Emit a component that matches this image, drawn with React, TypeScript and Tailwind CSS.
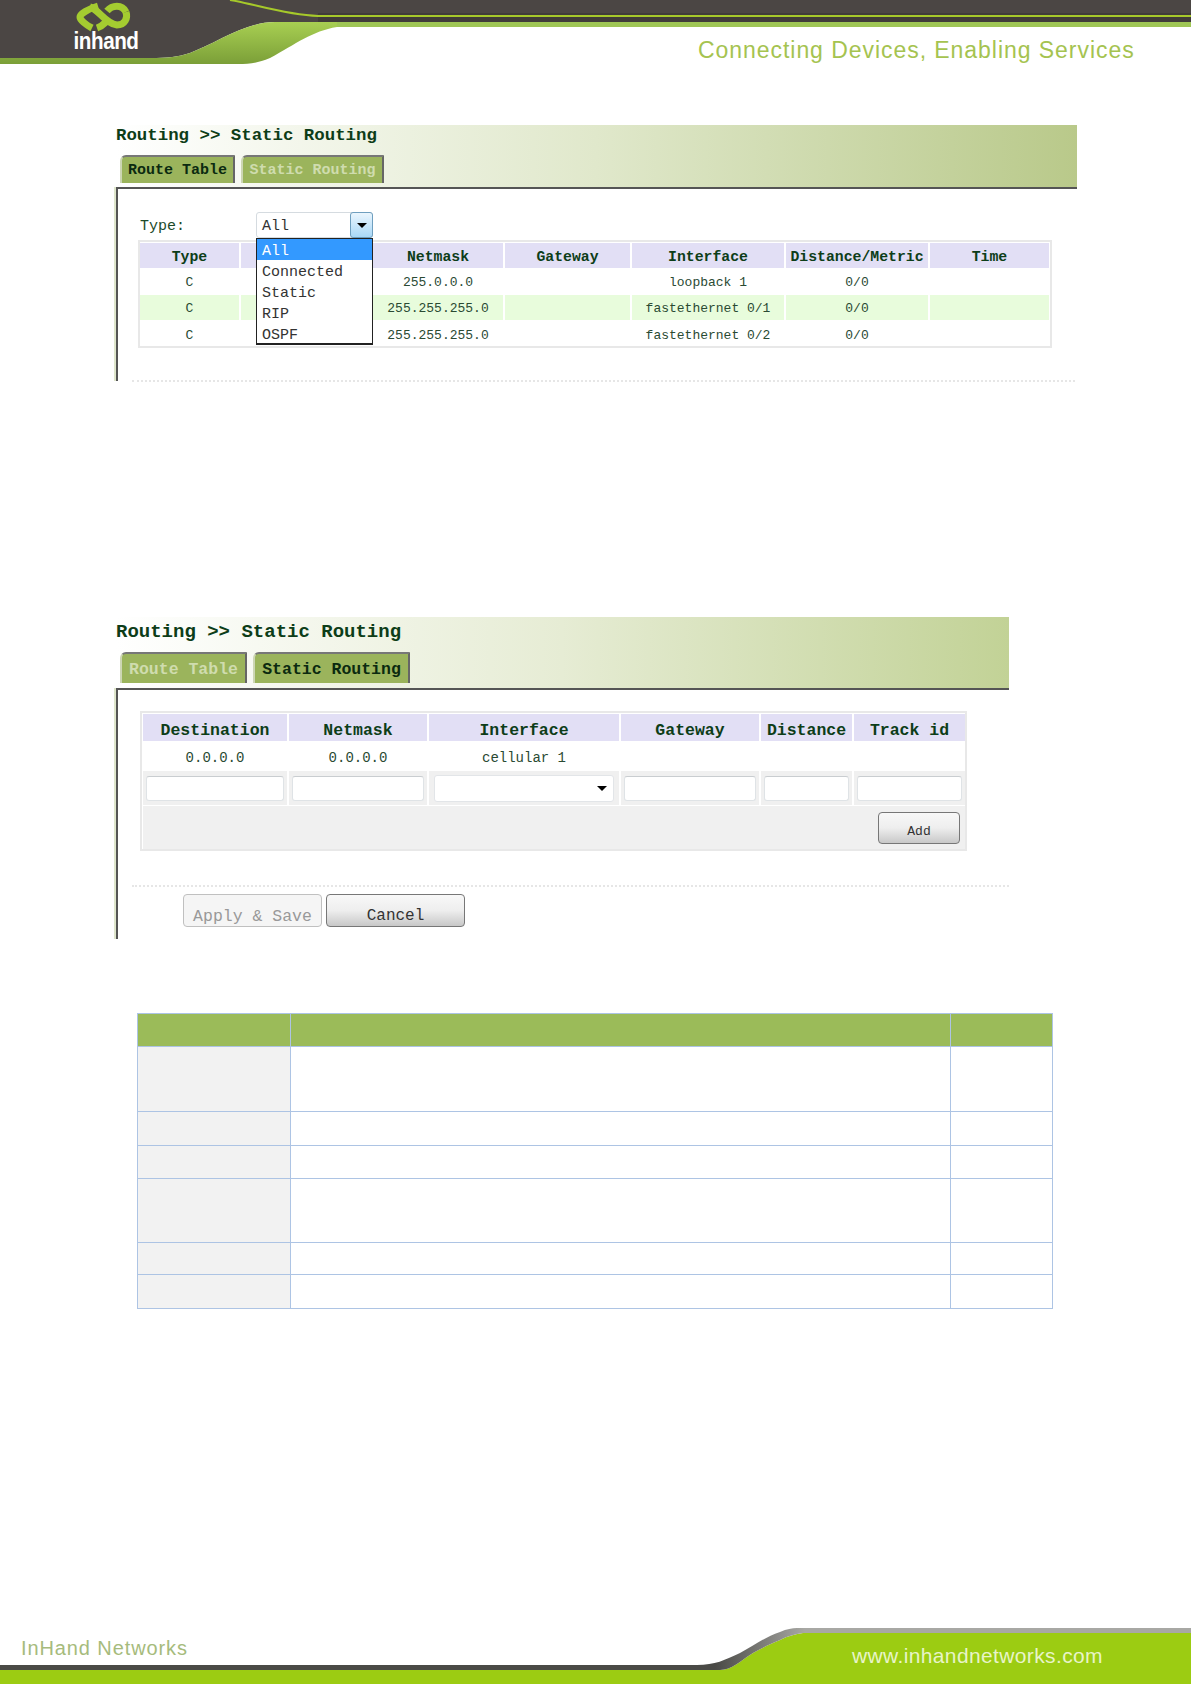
import React from 'react';

const mono = "font-['Liberation_Mono','DejaVu_Sans_Mono',monospace]";

const Header = () => (
  <div className="relative h-[73px] shrink-0">
    <svg width="1191" height="73" viewBox="0 0 1191 73" className="block">
      <defs>
        <linearGradient id="wave" x1="0" y1="0" x2="0" y2="1">
          <stop offset="0" stopColor="#a8cf52" />
          <stop offset="1" stopColor="#7b9f38" />
        </linearGradient>
      </defs>
      <path d="M0 0H1191V22H275C245 22 215 44 190 53C178 57 168 58 150 58H0Z" fill="#4b4644" />
      <path d="M318 13H1191V22H318Z" fill="#403c3a" />
      <path d="M0 58H150C168 58 178 57 190 53C215 44 245 22 275 22H1191V27H337C312 31 296 44 270 58C258 63 250 64 238 64H0Z" fill="url(#wave)" />
      <path d="M337 22H1191V27H337Z" fill="#9fc655" />
      <path d="M230 0C255 4 285 15 318 16H1191" fill="none" stroke="#a6c92a" strokeWidth="2" />
      {/* logo knot */}
      <g fill="none" stroke="#a4cc30" strokeWidth="7">
        <path d="M90 7C98 9 106 24 117 25C125 25 128 18 126 12" />
        <path d="M98 6C88 9 80 14 80 17C80 20 86 25 92 28" />
        <path d="M107 11C112 5 122 4 126 12" />
        <path d="M97 28C100 27 103 25 106 22" />
      </g>
    </svg>
    <span className="absolute left-[66px] top-[27px] w-[80px] text-center text-[24px] leading-[28px] font-bold text-white tracking-[-0.5px] scale-x-[0.86] font-['Liberation_Sans',sans-serif]">
      inhand
    </span>
    <span className="absolute left-[698px] top-[36px] text-[23px] leading-[28px] text-[#a5c350] tracking-[0.95px] whitespace-nowrap font-['Liberation_Sans',sans-serif]">
      Connecting Devices, Enabling Services
    </span>
  </div>
);

const Tab = ({ label, active, className }: { label: string; active: boolean; className: string }) => (
  <div
    className={`flex items-center justify-center bg-[#9bb45c] border-t-2 border-r-2 border-l-2 border-t-[#777] border-r-[#666] border-l-[#cdd6b4] rounded-tl-[6px] font-bold whitespace-nowrap ${mono} ${
      active ? 'text-[#0b2a10]' : 'text-[#cfdcae]'
    } ${className}`}
  >
    {label}
  </div>
);

const Arrow = () => (
  <span className="w-0 h-0 border-x-[5px] border-x-transparent border-t-[5px] border-t-black" />
);

const Input = () => (
  <div className="h-[25px] mx-[3px] mt-[5px] bg-white border border-[#dfe3e6] border-t-[#c9cdd0] rounded-[3px]" />
);

const RouteHead = ['Type', '', 'Netmask', 'Gateway', 'Interface', 'Distance/Metric', 'Time'];
const RouteRows = [
  ['C', '', '255.0.0.0', '', 'loopback 1', '0/0', ''],
  ['C', '', '255.255.255.0', '', 'fastethernet 0/1', '0/0', ''],
  ['C', '', '255.255.255.0', '', 'fastethernet 0/2', '0/0', ''],
];

const RouteTable = () => (
  <section className="ml-[116px] w-[961px] mt-[52px] shrink-0">
    <div className="h-[62px] bg-linear-to-r from-white via-[#e0e8cb] via-50% to-[#b9c98a]">
      <div className={`h-[30px] leading-[22px] text-[17.4px] font-bold text-[#0d3d18] whitespace-pre ${mono}`}>
        {'Routing >> Static Routing'}
      </div>
      <div className="flex gap-[6px] pl-[4px]">
        <Tab label="Route Table" active className="w-[115px] h-[28px] pt-[2px] text-[15px]" />
        <Tab label="Static Routing" active={false} className="w-[143px] h-[28px] pt-[2px] text-[15px]" />
      </div>
    </div>
    <div className="relative h-[194px] border-t-2 border-l-2 border-[#555] shadow-[-2px_0_0_#dfe6cc]">
      <div className="flex h-[51px] pl-[22px] pt-[23px]">
        <span className={`w-[116px] pt-[2px] leading-[26px] text-[15px] text-[#1c4a2a] ${mono}`}>Type:</span>
        <div className="relative">
          <div className="flex w-[117px] h-[26px] bg-white border border-[#d5dbe0] rounded-[3px]">
            <span className={`flex-1 pl-[5px] pt-[1px] leading-[26px] text-[15px] text-[#333] ${mono}`}>All</span>
            <span className="flex items-center justify-center w-[23px] -my-px -mr-px bg-linear-to-b from-[#eaf5fd] to-[#a9d8f7] border border-[#6f9fbf] rounded-[3px]">
              <Arrow />
            </span>
          </div>
          <div className={`absolute left-0 top-[26px] z-10 w-[117px] h-[107px] bg-white border border-[#222] border-b-2 text-[15px] leading-[21px] text-[#333] ${mono}`}>
            <div className="pl-[5px] pt-[2px] h-[21px] bg-[#3399ff] text-white">All</div>
            <div className="pl-[5px] pt-[2px] h-[21px]">Connected</div>
            <div className="pl-[5px] pt-[2px] h-[21px]">Static</div>
            <div className="pl-[5px] pt-[2px] h-[21px]">RIP</div>
            <div className="pl-[5px] pt-[2px] h-[21px]">OSPF</div>
          </div>
        </div>
      </div>
      <div className="ml-[20px] w-[914px] border-2 border-[#e8e8e8] pt-px pb-px pr-px">
        <div className="grid grid-cols-[99px_130px_130px_125px_152px_142px_119px] grid-rows-[25px_27px_25px_25px] gap-x-[2px]">
          {RouteHead.map((h, i) => (
            <div key={i} className={`flex items-center justify-center pt-[4px] bg-[#e2dff5] text-[14.8px] font-bold text-[#0d3d18] whitespace-nowrap ${mono}`}>
              {h}
            </div>
          ))}
          {RouteRows.map((row, r) =>
            row.map((c, i) => (
              <div
                key={`${r}-${i}`}
                className={`flex items-center justify-center text-[13px] text-[#2a4a33] whitespace-nowrap ${mono} ${r === 1 ? 'bg-[#e8fcdc]' : ''} ${r === 2 ? 'pt-[6px]' : 'pt-[3px]'}`}
              >
                {c}
              </div>
            ))
          )}
        </div>
      </div>
      <div className="absolute left-[14px] right-[2px] bottom-[-1px] border-t-2 border-dotted border-[#e6e6e6]" />
    </div>
  </section>
);

const StaticHead = ['Destination', 'Netmask', 'Interface', 'Gateway', 'Distance', 'Track id'];

const StaticRouting = () => (
  <section className="ml-[116px] w-[893px] mt-[236px] shrink-0">
    <div className="h-[71px] bg-linear-to-r from-white via-[#e6ecd4] via-50% to-[#c2d296]">
      <div className={`h-[35px] leading-[31px] text-[19px] font-bold text-[#0d3d18] whitespace-pre ${mono}`}>
        {'Routing >> Static Routing'}
      </div>
      <div className="flex gap-[6px] pl-[4px]">
        <Tab label="Route Table" active={false} className="w-[127px] h-[31px] pt-[3px] text-[16.5px]" />
        <Tab label="Static Routing" active className="w-[157px] h-[31px] pt-[3px] text-[16.5px]" />
      </div>
    </div>
    <div className="relative h-[251px] border-t-2 border-l-2 border-[#555] shadow-[-2px_0_0_#dfe6cc]">
      <div className="ml-[22px] mt-[21px] w-[827px] border-2 border-[#e8e8e8] pt-px pl-px">
        <div className="grid grid-cols-[144px_138px_190px_138px_91px_111px] grid-rows-[27px_30px_34px_44px] gap-x-[2px]">
          {StaticHead.map((h) => (
            <div key={h} className={`flex items-center justify-center pt-[7px] bg-[#e2dff5] text-[16.5px] font-bold text-[#0d3d18] whitespace-nowrap ${mono}`}>
              {h}
            </div>
          ))}
          {['0.0.0.0', '0.0.0.0', 'cellular 1', '', '', ''].map((c, i) => (
            <div key={i} className={`flex items-center justify-center pt-[4px] text-[14px] text-[#2a4a33] whitespace-nowrap ${mono}`}>
              {c}
            </div>
          ))}
          <div className="bg-[#f0f0f0]"><Input /></div>
          <div className="bg-[#f0f0f0]"><Input /></div>
          <div className="bg-[#f0f0f0]">
            <div className="flex items-center justify-end h-[27px] mx-[5px] mt-[4px] pr-[6px] bg-white border border-[#e2e5e8] rounded-[3px]">
              <Arrow />
            </div>
          </div>
          <div className="bg-[#f0f0f0]"><Input /></div>
          <div className="bg-[#f0f0f0]"><Input /></div>
          <div className="bg-[#f0f0f0]"><Input /></div>
          <div className="col-span-6 flex justify-end border-t border-white bg-[#f0f0f0] pt-[6px] pr-[5px]">
            <button className={`w-[82px] h-[32px] pt-[8px] bg-linear-to-b from-[#f8f8f8] via-[#eeeeee] to-[#c8c8c8] border border-[#777] rounded-[4px] text-[13px] text-[#333] ${mono}`}>
              Add
            </button>
          </div>
        </div>
      </div>
      <div className="absolute left-[14px] right-0 top-[195px] border-t-2 border-dotted border-[#e6e6e6]" />
      <div className="absolute left-[65px] top-[204px] flex gap-[4px]">
        <button className={`w-[139px] h-[33px] pt-[10px] bg-[#f5f5f5] border border-[#c0c0c0] rounded-[4px] text-[16.5px] text-[#999] ${mono}`}>
          {'Apply & Save'}
        </button>
        <button className={`w-[139px] h-[33px] pt-[9px] bg-linear-to-b from-[#f8f8f8] via-[#eeeeee] to-[#c8c8c8] border border-[#777] rounded-[4px] text-[16px] text-[#333] ${mono}`}>
          Cancel
        </button>
      </div>
    </div>
  </section>
);

const rowHeights = ['h-[65px]', 'h-[34px]', 'h-[33px]', 'h-[64px]', 'h-[32px]', 'h-[34px]'];

const ParamTable = () => (
  <table className="ml-[137px] mt-[74px] w-[915px] table-fixed border-collapse shrink-0">
    <colgroup>
      <col className="w-[153px]" />
      <col className="w-[660px]" />
      <col className="w-[102px]" />
    </colgroup>
    <tbody>
      <tr className="h-[33px] bg-[#9bbb59]">
        <td className="border border-[#adc4e4]" />
        <td className="border border-[#adc4e4]" />
        <td className="border border-[#adc4e4]" />
      </tr>
      {rowHeights.map((h, i) => (
        <tr key={i} className={h}>
          <td className="border border-[#adc4e4] bg-[#f2f2f2]" />
          <td className="border border-[#adc4e4]" />
          <td className="border border-[#adc4e4]" />
        </tr>
      ))}
    </tbody>
  </table>
);

const Footer = () => (
  <div className="relative mt-auto h-[60px] shrink-0">
    <svg width="1191" height="60" viewBox="0 0 1191 60" className="block">
      <defs>
        <linearGradient id="ribbon" gradientUnits="userSpaceOnUse" x1="715" y1="0" x2="805" y2="0">
          <stop offset="0" stopColor="#4a4a46" />
          <stop offset="1" stopColor="#a8a8a4" />
        </linearGradient>
      </defs>
      <path d="M0 46H720C732 46 740 37 753 29C762 24 770 20 780 16C788 12 795 10 803 9H1191V60H0Z" fill="#9ccc12" />
      <path d="M0 41H697C715 41 725 36 740 29C755 21 765 13 780 8C787 5 792 4 797 4H1191V9H803C795 10 788 12 780 16C770 20 762 24 753 29C740 37 732 46 720 46H0Z" fill="url(#ribbon)" />
    </svg>
    <span className="absolute left-[21px] top-[12px] text-[20px] leading-[24px] text-[#a6bb7c] tracking-[0.9px] whitespace-nowrap font-['Liberation_Sans',sans-serif]">
      InHand Networks
    </span>
    <span className="absolute left-[852px] top-[19px] text-[21px] leading-[26px] text-[#e8f4c8] tracking-[0.37px] whitespace-nowrap font-['Liberation_Sans',sans-serif]">
      www.inhandnetworks.com
    </span>
  </div>
);

export default function App() {
  return (
    <div className="flex flex-col w-[1191px] h-[1684px] bg-white overflow-hidden">
      <Header />
      <RouteTable />
      <StaticRouting />
      <ParamTable />
      <Footer />
    </div>
  );
}
